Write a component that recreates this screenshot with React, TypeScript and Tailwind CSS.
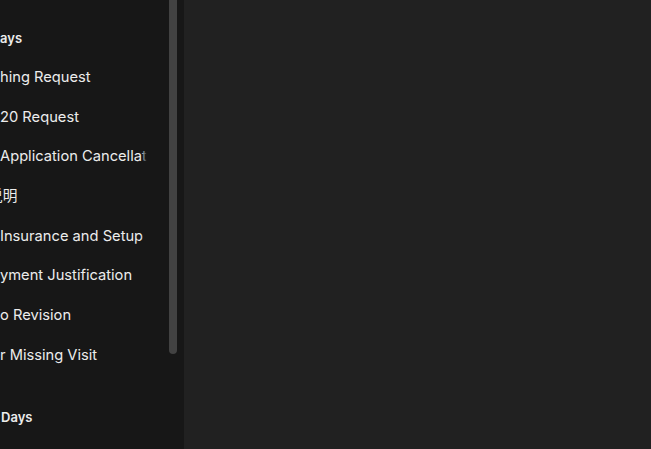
import React from 'react'

// sidebar history list, scrolled sideways so the left edge is clipped
const items: { text: React.ReactNode }[] = [
  { text: 'hing Request' },
  { text: '20 Request' },
  { text: 'Application Cancellation Notice' },
  { text: <><span className="-ml-[12px]">说</span>明</> },
  { text: 'Insurance and Setup' },
  { text: 'yment Justification' },
  { text: 'o Revision' },
  { text: 'r Missing Visit' },
]

function Row({ children }: { children: React.ReactNode }) {
  return (
    <div className="relative flex h-[39.7px] items-center">
      <div className="w-[147px] overflow-hidden whitespace-nowrap text-[14.7px] text-[#ececec]">
        {children}
      </div>
      {/* fade-out at the clipped end */}
      <div className="pointer-events-none absolute left-[141px] top-0 h-full w-[6px] bg-gradient-to-r from-transparent to-[#171717]" />
    </div>
  )
}

export default function App() {
  return (
    <div
      className="flex h-[449px] w-[651px] overflow-hidden bg-[#212121]"
      style={{ fontFamily: 'Inter, "Noto Sans CJK SC", sans-serif' }}
    >
      <aside className="relative flex h-full w-[184px] shrink-0 flex-col bg-[#171717]">
        <div className="mt-[29px] flex h-5 items-center text-[13px] font-semibold text-[#ececec]">ays</div>
        <div className="mt-2 flex flex-col">
          {items.map((it, i) => (
            <Row key={i}>{it.text}</Row>
          ))}
        </div>
        <div className="mt-[33px] flex h-5 items-center pl-px text-[13px] font-semibold text-[#ececec]">Days</div>

        {/* scrollbar thumb */}
        <div className="absolute left-[169px] top-0 h-[354px] w-2 rounded-b-full bg-[#424242]" />
      </aside>
      <main className="flex-1" />
    </div>
  )
}
